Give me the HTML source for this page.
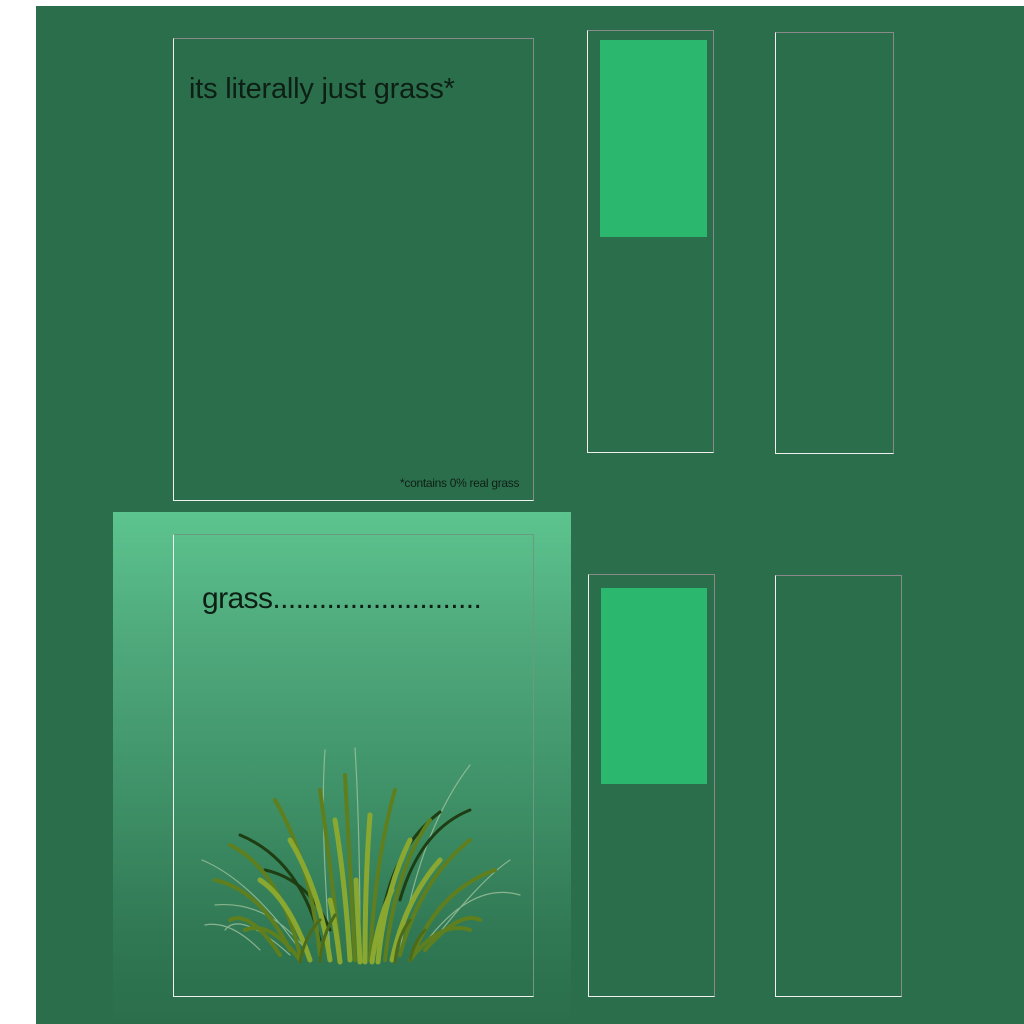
<!DOCTYPE html>
<html><head><style>
body{margin:0;width:1024px;height:1024px;background:#fff;position:relative;overflow:hidden;font-family:"Liberation Sans",sans-serif}
.bg{position:absolute;left:36px;top:6px;width:988px;height:1018px;background:#2b6e4c}
.box{position:absolute;box-sizing:border-box;border:1px solid #8a8a8a;border-left-color:#f0f0f0;border-bottom-color:#f0f0f0}
.g{position:absolute;background:#2bb86e}
.grad{position:absolute;left:113px;top:512px;width:458px;height:512px;background:linear-gradient(#5cc48f 0%,#4fa97b 25%,#3f9168 55%,#2f7652 85%,#2b6e4c 100%)}
.t{position:absolute;color:#0d1f14;white-space:nowrap}
</style></head><body>
<div class="bg"></div>
<div class="box" style="left:173px;top:38px;width:361px;height:463px"></div>
<div class="t" style="left:189px;top:73px;font-size:29px;letter-spacing:-0.2px">its literally just grass*</div>
<div class="t" style="left:400px;top:476px;font-size:12px;letter-spacing:-0.3px">*contains 0% real grass</div>
<div class="box" style="left:587px;top:30px;width:127px;height:423px"></div>
<div class="g" style="left:600px;top:40px;width:107px;height:197px"></div>
<div class="box" style="left:775px;top:32px;width:119px;height:422px"></div>
<div class="grad"></div>
<div class="box" style="left:173px;top:534px;width:361px;height:463px;border-top-color:#6a9a80;border-right-color:#6a9a80"></div>
<div class="t" style="left:202px;top:582px;font-size:30px;letter-spacing:-0.6px">grass...........................</div>
<div class="box" style="left:588px;top:574px;width:127px;height:423px"></div>
<div class="g" style="left:601px;top:588px;width:106px;height:196px"></div>
<div class="box" style="left:775px;top:575px;width:127px;height:422px"></div>
<svg style="position:absolute;left:0;top:0" width="1024" height="1024" fill="none" stroke-linecap="round">
<g stroke="#9fc29a" stroke-width="1.2" opacity="0.8">
<path d="M300 950 Q250 880 202 860"/><path d="M310 955 Q270 900 215 905"/><path d="M420 950 Q470 880 520 895"/>
<path d="M430 945 Q480 880 510 860"/><path d="M330 950 Q320 820 325 750"/><path d="M360 950 Q360 830 355 748"/>
<path d="M400 950 Q420 830 470 765"/><path d="M290 955 Q240 910 225 930"/><path d="M260 950 Q230 920 205 925"/>
</g>
<g stroke="#1f3d12" stroke-width="3">
<path d="M320 940 Q300 860 240 835"/><path d="M400 900 Q420 830 470 810"/><path d="M380 930 Q390 850 440 812"/><path d="M330 930 Q310 880 265 870"/>
</g>
<g stroke="#5f7f1f" stroke-width="4">
<path d="M300 955 Q280 870 230 845"/><path d="M320 955 Q310 860 275 800"/><path d="M340 955 Q330 860 320 790"/>
<path d="M355 960 Q350 860 345 775"/><path d="M370 960 Q375 860 395 790"/><path d="M385 960 Q395 870 430 820"/>
<path d="M400 955 Q420 880 470 840"/><path d="M415 950 Q440 890 495 870"/><path d="M290 950 Q260 890 215 880"/>
<path d="M280 955 Q250 910 230 920"/><path d="M425 950 Q460 910 480 920"/><path d="M300 960 Q270 920 245 930"/>
<path d="M410 960 Q440 920 470 930"/>
</g>
<g stroke="#8aa830" stroke-width="5">
<path d="M330 960 Q320 890 290 840"/><path d="M350 960 Q345 880 335 820"/><path d="M365 962 Q365 880 370 815"/>
<path d="M378 962 Q385 890 410 840"/><path d="M392 960 Q405 900 440 860"/><path d="M310 960 Q290 900 260 880"/>
<path d="M340 962 Q335 920 330 900"/><path d="M360 962 Q358 920 356 880"/><path d="M372 962 Q378 920 392 890"/>
</g>
<g stroke="#4d6a18" stroke-width="3">
<path d="M300 962 Q305 935 320 920"/><path d="M320 962 Q322 935 335 915"/><path d="M395 962 Q398 935 410 920"/><path d="M410 960 Q415 940 425 930"/>
</g>
</svg>
</body></html>
